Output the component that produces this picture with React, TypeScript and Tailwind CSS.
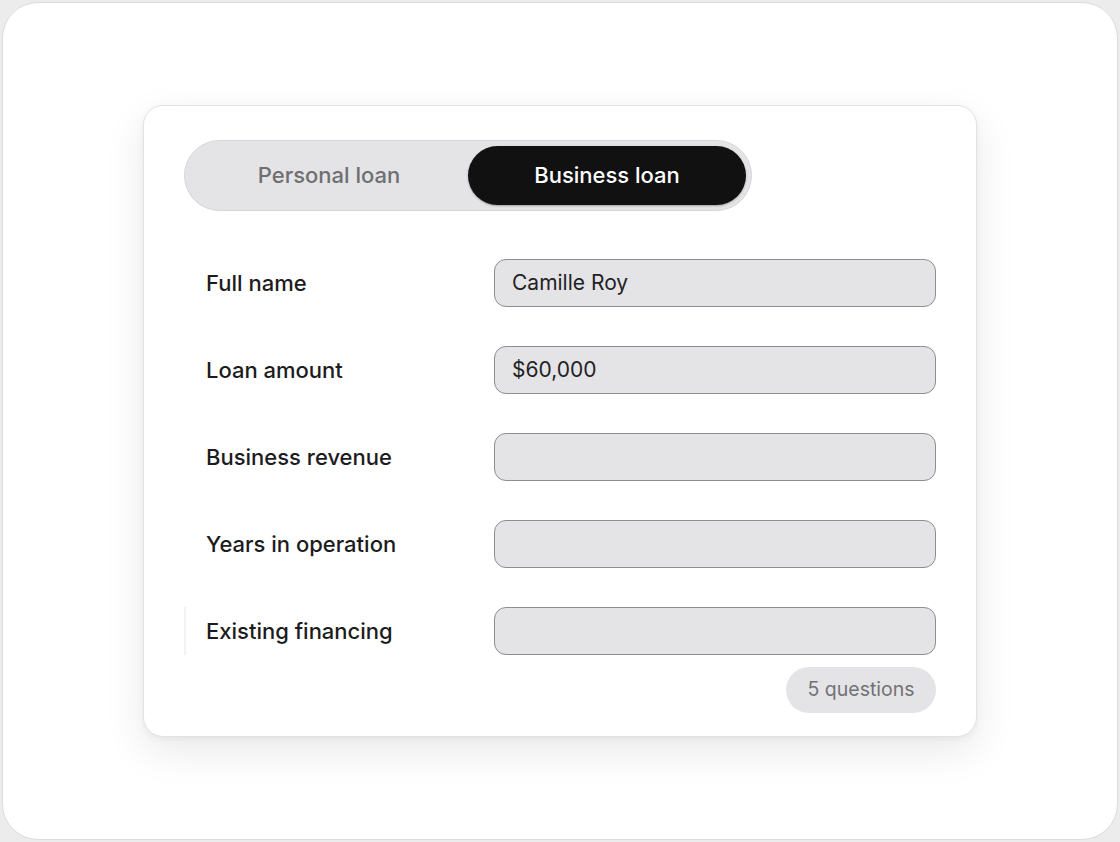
import React from 'react';

const fields = [
  { label: 'Full name', value: 'Camille Roy' },
  { label: 'Loan amount', value: '$60,000' },
  { label: 'Business revenue', value: '' },
  { label: 'Years in operation', value: '' },
  { label: 'Existing financing', value: '' },
];

const App: React.FC = () => {
  return (
    <div
      className="w-[1120px] h-[842px] bg-[#ececec] p-[2px]"
      style={{ fontFamily: 'Inter, "Noto Sans", sans-serif' }}
    >
      <div className="w-full h-full bg-white rounded-[36px] border border-[#dcdcdc] flex items-center justify-center">
        <div className="w-[834px] h-[632px] bg-white rounded-[20px] border border-[#e2e2e2] shadow-[0_14px_40px_rgba(0,0,0,0.09),0_2px_6px_rgba(0,0,0,0.05)] pt-[34px] px-[40px] flex flex-col">
          {/* Loan type switch */}
          <div className="w-[568px] h-[71px] shrink-0 rounded-full bg-[#e4e4e6] border border-[#d6d6d8] p-[5px] flex">
            <button className="flex-1 rounded-full text-[22px] font-medium text-[#6f6f72]">
              Personal loan
            </button>
            <button className="flex-1 rounded-full bg-[#111112] text-[22px] font-medium text-white shadow-[0_1px_2px_rgba(0,0,0,0.3)]">
              Business loan
            </button>
          </div>

          {/* Form */}
          <div className="mt-[48px] flex flex-col gap-[39px]">
            {fields.map((f, i) => (
              <div
                key={f.label}
                className={
                  'flex items-center h-[48px] ' +
                  (i === fields.length - 1 ? 'border-l-2 border-[#f2f2f2] pl-[20px]' : 'pl-[22px]')
                }
              >
                <span className="w-[288px] text-[22px] font-medium text-[#1c1c1e]">{f.label}</span>
                <div className="w-[442px] h-[48px] rounded-[12px] bg-[#e4e4e6] border border-[#8e8e92] px-[17px] flex items-center text-[21px] text-[#222224]">
                  {f.value}
                </div>
              </div>
            ))}
          </div>

          <div className="mt-[12px] flex justify-end">
            <span className="h-[46px] w-[150px] rounded-full bg-[#e4e4e6] flex items-center justify-center text-[19.5px] text-[#727276]">
              5 questions
            </span>
          </div>
        </div>
      </div>
    </div>
  );
};

export default App;
